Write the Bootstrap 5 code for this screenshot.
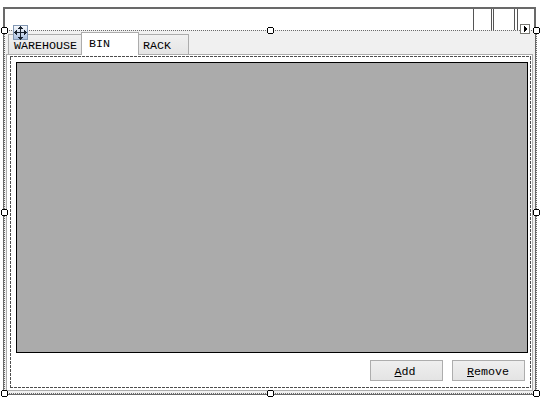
<!DOCTYPE html>
<html lang="en">
<head>
<meta charset="utf-8">
<title>Form designer</title>
<link href="https://cdn.jsdelivr.net/npm/bootstrap@5.3.0/dist/css/bootstrap.min.css" rel="stylesheet">
<style>
body{font:11.67px/13px "Courier New","Liberation Mono",monospace;color:#000;background:#fff;width:541px;height:401px}
.designer{width:541px;height:401px;padding:7px 5px 0 3px}
.form-frame{width:533px;height:388px;border:2px solid #696969;border-bottom-width:1px}
.header-strip{height:21px;padding-right:16px}
.divider{width:1px;background:#555}
.tab-control{height:364px;background:#f0f0f0;padding:3px 1px 3px 1px}
.tab-strip{height:21px;padding-left:2px}
.tab-strip .nav-link{height:20px;padding:5px 4px 0 5px;border:1px solid #acacac;border-bottom:0;border-radius:0;color:#000;background:linear-gradient(#f0f0f0,#e5e5e5);white-space:pre;margin:0}
.tab-strip .nav-link.active{height:23px;width:58px;background:#fff;color:#000;padding:5px 0 0 7px;margin:0 -1px -1px;position:relative;z-index:1}
.tab-strip .nav-link:last-child{width:51px;padding-left:4px}
.tab-page{height:337px;border:1px solid #acacac;background:#fff;padding:7px 4px 0 9px}
.data-grid{width:512px;height:291px;background:#ababab;border:1px solid #000}
.actions{padding:7px 3px 0 0;gap:9px}
.actions .btn{width:73px;height:21px;padding:3px 0 0 0;border:1px solid #adadad;border-radius:0;background:linear-gradient(#efefef,#e4e4e4);font:inherit;color:#000}
.actions .btn:first-child{padding-right:3px}
.actions .btn:last-child{padding-right:1px}
.actions u{text-underline-offset:1px}
.adorners{left:0;top:0;pointer-events:none;z-index:5}
</style>
<script src="https://cdn.jsdelivr.net/npm/bootstrap@5.3.0/dist/js/bootstrap.bundle.min.js"></script>
</head>
<body class="overflow-hidden position-relative">
<main class="designer">
  <div class="form-frame">
    <div class="header-strip d-flex justify-content-end bg-white">
      <span class="divider"></span><span class="divider" style="margin-left:17px"></span><span class="divider" style="margin-left:1px"></span><span class="divider" style="margin-left:20px"></span><span class="divider" style="margin-left:2px"></span>
    </div>
    <section class="tab-control">
      <nav class="nav tab-strip flex-nowrap align-items-end">
        <a class="nav-link">WAREHOUSE</a>
        <a class="nav-link active">BIN</a>
        <a class="nav-link">RACK</a>
      </nav>
      <div class="tab-page">
        <div class="data-grid"></div>
        <div class="actions d-flex justify-content-end">
          <button class="btn"><u>A</u>dd</button>
          <button class="btn"><u>R</u>emove</button>
        </div>
      </div>
    </section>
  </div>
</main>
<!-- selection outline, resize handles, move grip and smart-tag -->
<svg class="adorners position-absolute" width="541" height="401" viewBox="0 0 541 401" shape-rendering="crispEdges">
  <defs>
    <g id="handle"><path d="M1 0h5v1h1v5h-1v1h-5v-1h-1v-5h1z" fill="#000"/><path d="M1 1h5v5h-5z" fill="#fff"/></g>
    <linearGradient id="grip" x2="0" y2="1"><stop stop-color="#f8fafc"/><stop offset="1" stop-color="#a9bfdf"/></linearGradient>
  </defs>
  <path d="M5 30h530v1H5zM4 31h1v362H4zM534 31h1v362h-1zM536 31h1v362h-1z" fill="#f0f0f0"/>
  <g fill="none" stroke="#696969" stroke-dasharray="1 1">
    <path d="M5 30.5H535M4.5 32V393M536.5 32V393M5 393.5H536"/>
  </g>
  <g fill="none" stroke="#4c4c4c" stroke-dasharray="3 1"><path d="M10 56.5H531M10 387.5H531M10.5 57V387M530.5 57V387"/></g>
  <use href="#handle" x="1" y="27"/><use href="#handle" x="267" y="27"/><use href="#handle" x="533" y="27"/>
  <use href="#handle" x="1" y="209"/><use href="#handle" x="533" y="209"/>
  <use href="#handle" x="1" y="390"/><use href="#handle" x="267" y="390"/><use href="#handle" x="533" y="390"/>
  <rect x="13.5" y="25.5" width="14" height="14" rx="1" fill="url(#grip)" stroke="#8196b2"/>
  <path d="M20 28h1v10h-1zM15 32h11v1H15zM19 27h3v1h-3zM18 28h5v1h-5zM18 37h5v1h-5zM19 38h3v1h-3zM20 26h1v1h-1zM20 39h1v1h-1zM15 31h1v3h-1zM16 30h1v5h-1zM25 31h1v3h-1zM24 30h1v5h-1zM14 32h1v1h-1zM26 32h1v1h-1z" fill="#17202c"/>
  <rect x="520.5" y="24.5" width="9" height="9" rx="1" fill="#fff" stroke="#777771"/>
  <path d="M524 26h1v1h1v1h1v2h-1v1h-1v1h-1z" fill="#000"/>
</svg>
</body>
</html>
